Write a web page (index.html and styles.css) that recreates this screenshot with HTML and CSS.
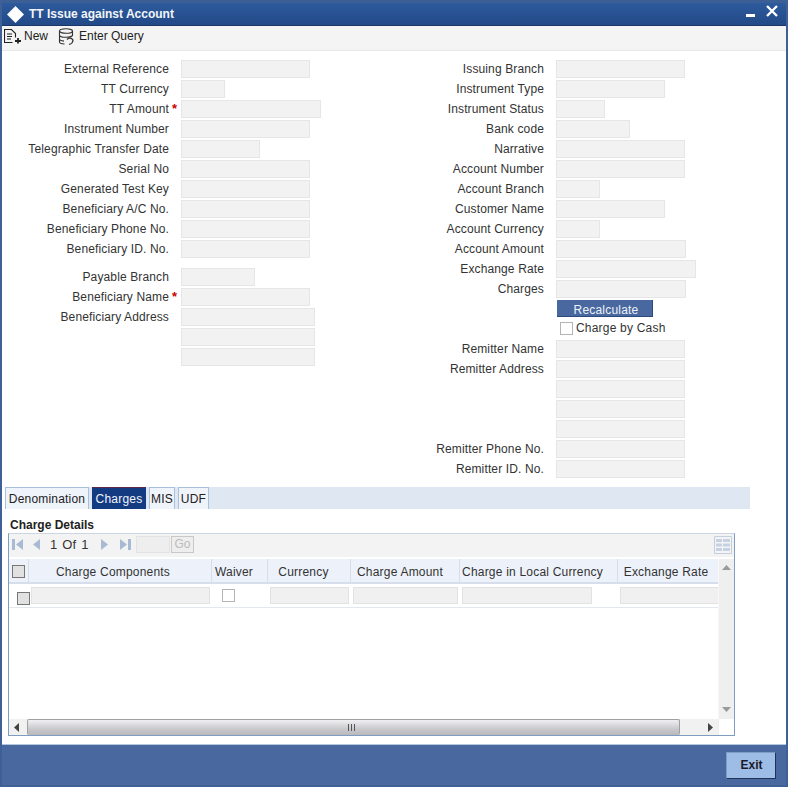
FILE: index.html
```html
<!DOCTYPE html>
<html lang="en">
<head>
<meta charset="utf-8">
<title>TT Issue against Account</title>
<link rel="stylesheet" href="styles.css">
</head>
<body>
<div class="window">
  <header class="titlebar">
    <svg class="logo" width="17" height="17" viewBox="0 0 17 17"><path d="M8.500 0 17 8.500 8.500 17 0 8.500Z" fill="#fff"/></svg>
    <h1 class="title">TT Issue against Account</h1>
    <span class="minimize"></span>
    <svg class="close" width="12" height="12" viewBox="0 0 12 12"><path d="M1 1 11 11M11 1 1 11" stroke="#fff" stroke-width="2.4" fill="none"/></svg>
  </header>
  <div class="toolbar">
    <span class="tool">
      <svg width="18" height="16" viewBox="0 0 18 16" fill="none" stroke="#222" stroke-width="1.1"><path d="M.5 15V1.5h7l4 4v4M3 6h5M3 8.5h5M3 11h4M.5 14.500h8"/><path d="M14 10v5.500M11 13h6" stroke-width="1.800"/></svg>
      New
    </span>
    <span class="tool tool-query">
      <svg width="17" height="17" viewBox="0 0 17 17" fill="none" stroke="#333" stroke-width="1.100"><ellipse cx="8" cy="3" rx="6.500" ry="2.300"/><path d="M1.500 3v11c0 1 2 1.800 5 2M14.500 3v5M1.500 7c0 1.300 3 2.300 6.500 2.300s6.500-1 6.500-2.300M1.500 11c0 1 2 1.800 4.500 2.100"/><path d="M9 11.500c1.500-1.800 4.500-1.800 6 .5l-.7 2.500c-.8 1.200-2 1.800-3.300 1.800" stroke-width="1.300"/></svg>
      Enter Query
    </span>
  </div>
  <main class="form">
    <section class="col col-left">
      <div class="row"><label>External Reference</label><span class="input w129"></span></div>
      <div class="row"><label>TT Currency</label><span class="input w44"></span></div>
      <div class="row"><label>TT Amount<b class="req">*</b></label><span class="input w140"></span></div>
      <div class="row"><label>Instrument Number</label><span class="input w129"></span></div>
      <div class="row"><label>Telegraphic Transfer Date</label><span class="input w79"></span></div>
      <div class="row"><label>Serial No</label><span class="input w129"></span></div>
      <div class="row"><label>Generated Test Key</label><span class="input w129"></span></div>
      <div class="row"><label>Beneficiary A/C No.</label><span class="input w129"></span></div>
      <div class="row"><label>Beneficiary Phone No.</label><span class="input w129"></span></div>
      <div class="row"><label>Beneficiary ID. No.</label><span class="input w129"></span></div>
      <div class="row group-gap"><label>Payable Branch</label><span class="input w74"></span></div>
      <div class="row"><label>Beneficiary Name<b class="req">*</b></label><span class="input w129"></span></div>
      <div class="row"><label>Beneficiary Address</label><span class="input w134"></span></div>
      <div class="row"><label></label><span class="input w134"></span></div>
      <div class="row"><label></label><span class="input w134"></span></div>
    </section>
    <section class="col col-right">
      <div class="row"><label>Issuing Branch</label><span class="input w129"></span></div>
      <div class="row"><label>Instrument Type</label><span class="input w109"></span></div>
      <div class="row"><label>Instrument Status</label><span class="input w49"></span></div>
      <div class="row"><label>Bank code</label><span class="input w74"></span></div>
      <div class="row"><label>Narrative</label><span class="input w129"></span></div>
      <div class="row"><label>Account Number</label><span class="input w129"></span></div>
      <div class="row"><label>Account Branch</label><span class="input w44"></span></div>
      <div class="row"><label>Customer Name</label><span class="input w109"></span></div>
      <div class="row"><label>Account Currency</label><span class="input w44"></span></div>
      <div class="row"><label>Account Amount</label><span class="input w130"></span></div>
      <div class="row"><label>Exchange Rate</label><span class="input w140"></span></div>
      <div class="row"><label>Charges</label><span class="input w130"></span></div>
      <div class="row row-btn"><label></label><span class="recalc">Recalculate</span></div>
      <div class="row row-check"><label></label><span class="check"></span><span class="check-label">Charge by Cash</span></div>
      <div class="row"><label>Remitter Name</label><span class="input w129"></span></div>
      <div class="row"><label>Remitter Address</label><span class="input w129"></span></div>
      <div class="row"><label></label><span class="input w129"></span></div>
      <div class="row"><label></label><span class="input w129"></span></div>
      <div class="row"><label></label><span class="input w129"></span></div>
      <div class="row"><label>Remitter Phone No.</label><span class="input w129"></span></div>
      <div class="row"><label>Remitter ID. No.</label><span class="input w129"></span></div>
    </section>
  </main>
  <nav class="tabs">
    <span class="tab tab-den">Denomination</span>
    <span class="tab tab-active">Charges</span>
    <span class="tab tab-mis">MIS</span>
    <span class="tab tab-udf">UDF</span>
  </nav>
  <div class="details">
    <h2 class="details-title">Charge Details</h2>
    <div class="grid-box">
      <div class="pager">
        <svg class="pg" width="13" height="13" viewBox="0 0 13 13"><path d="M1 1h3v11H1zM12 1v11L5 6.500z" fill="#a9bad3"/></svg>
        <svg class="pg pg-prev" width="9" height="13" viewBox="0 0 9 13"><path d="M8 1v11L1 6.500z" fill="#a9bad3"/></svg>
        <span class="pg-text">1 Of 1</span>
        <svg class="pg pg-next" width="9" height="13" viewBox="0 0 9 13"><path d="M1 1v11l7-5.500z" fill="#a9bad3"/></svg>
        <svg class="pg pg-last" width="13" height="13" viewBox="0 0 13 13"><path d="M12 1H9v11h3zM1 1v11l7-5.500z" fill="#a9bad3"/></svg>
        <span class="pg-input"></span>
        <span class="pg-go">Go</span>
        <svg class="pg-columns" width="18" height="18" viewBox="0 0 18 18"><path d="M.5.5h17v17H.5z" fill="#f4f4f4" stroke="#c3cfdf"/><path d="M2 3h14v3H2zM2 7.500h14v3H2zM2 12h14v3H2z" fill="#c6d2e2"/><path d="M8.500 2v14" stroke="#f4f4f4"/></svg>
      </div>
      <div class="grid-body">
        <div class="grid-main">
          <div class="thead">
            <span class="th c-check"><span class="box"></span></span>
            <span class="th c-comp">Charge Components</span>
            <span class="th c-waiver">Waiver</span>
            <span class="th c-cur">Currency</span>
            <span class="th c-amt">Charge Amount</span>
            <span class="th c-local">Charge in Local Currency</span>
            <span class="th c-rate">Exchange Rate</span>
          </div>
          <div class="trow">
            <span class="td c-check"><span class="box box-row"></span></span>
            <span class="td c-comp"><span class="cell-input"></span></span>
            <span class="td c-waiver"><span class="check check-cell"></span></span>
            <span class="td c-cur"><span class="cell-input"></span></span>
            <span class="td c-amt"><span class="cell-input"></span></span>
            <span class="td c-local"><span class="cell-input cell-short"></span></span>
            <span class="td c-rate"><span class="cell-input cell-cut"></span></span>
          </div>
        </div>
        <div class="vscroll">
          <svg width="9" height="6" viewBox="0 0 9 6"><path d="M0 5h9L4.500 0z" fill="#9a9a9a"/></svg>
          <svg width="9" height="6" viewBox="0 0 9 6"><path d="M0 1h9L4.500 6z" fill="#9a9a9a"/></svg>
        </div>
      </div>
      <div class="hscroll">
        <svg class="arrow" width="6" height="9" viewBox="0 0 6 9"><path d="M5 0v9L0 4.500z" fill="#444"/></svg>
        <div class="thumb"><span class="grip"></span></div>
        <svg class="arrow arrow-right" width="6" height="9" viewBox="0 0 6 9"><path d="M1 0v9l5-4.500z" fill="#444"/></svg>
        <span class="corner"></span>
      </div>
    </div>
  </div>
  <footer class="footer"><span class="exit">Exit</span></footer>
</div>
</body>
</html>
```
FILE: styles.css
```css
* { box-sizing: border-box; }
html, body { margin: 0; padding: 0; }
body {
  width: 788px;
  height: 787px;
  overflow: hidden;
  font-family: "Liberation Sans", Arial, sans-serif;
  font-size: 12px;
  letter-spacing: .2px;
  color: #333;
  background: #fff;
}
.window {
  width: 788px;
  height: 787px;
  border-left: 2px solid #3f6096;
  border-right: 2px solid #3f6096;
  display: flex;
  flex-direction: column;
  background: #fff;
}
.titlebar {
  height: 26px;
  flex: none;
  display: flex;
  align-items: center;
  padding: 3px 8px 0 5px;
  border-bottom: 1px solid #1b3768;
  background: linear-gradient(#2f5d9f, #224988);
  box-shadow: inset 0 3px 0 #3c6096;
  color: #fff;
}
.logo { margin-right: 5px; }
.title { margin: 0; font-size: 12px; font-weight: bold; letter-spacing: 0; flex: 1; color: #f2f5fa; }
.minimize { width: 9px; height: 3px; background: #fff; margin: 3px 11px 0 0; }
.close { margin-top: -6px; }
.toolbar {
  height: 25px;
  flex: none;
  display: flex;
  align-items: center;
  padding: 0 0 4px 2px;
  background: #f4f4f4;
  border-bottom: 1px solid #e8e8e8;
  color: #222;
  letter-spacing: 0;
}
.tool { display: flex; align-items: center; gap: 2px; }
.tool-query { margin-left: 10px; gap: 4px; }
.form { display: flex; height: 436px; flex: none; padding-top: 8px; }
.col { display: flex; flex-direction: column; }
.col-left { width: 375px; }
.row { height: 20px; display: flex; align-items: center; flex: none; }
.group-gap { margin-top: 8px; }
.row label { text-align: right; white-space: nowrap; position: relative; flex: none; width: 167px; margin-right: 12px; letter-spacing: .13px; }
.req { position: absolute; left: 170px; top: -1px; color: #c00; font-size: 13px; }
.input {
  display: block;
  height: 18px;
  background: #f2f2f2;
  border: 1px solid #e6e6e6;
}
.w44 { width: 44px; }
.w49 { width: 49px; }
.w74 { width: 74px; }
.w79 { width: 79px; }
.w109 { width: 109px; }
.w129 { width: 129px; }
.w130 { width: 130px; }
.w134 { width: 134px; }
.w140 { width: 140px; }
.row-btn { height: 17px; margin-top: 1px; align-items: flex-start; }
.recalc {
  width: 96px;
  height: 17px;
  margin-left: 1px;
  padding-left: 3px;
  background: #48689f;
  border-bottom: 1px solid #2c4a7c;
  border-right: 1px solid #2c4a7c;
  color: #eef2f8;
  text-align: center;
  line-height: 20px;
}
.row-check { margin: 1px 0; height: 20px; }
.check {
  display: block;
  width: 13px;
  height: 13px;
  margin-left: 4px;
  background: #fff;
  border: 1px solid #b4b4b4;
}
.check-label { margin-left: 3px; color: #333; }
.tabs {
  width: 745px;
  margin-left: 3px;
  height: 22px;
  flex: none;
  display: flex;
  align-items: flex-end;
  background: #dfe7f3;
  gap: 3px;
}
.tab {
  height: 22px;
  text-align: center;
  line-height: 23px;
  background: #eff3fa;
  border: 1px solid #a9c0dc;
  border-bottom: none;
  color: #222;
}
.tab-den { width: 84px; }
.tab-active { width: 54px; background: #133b82; border-color: #5b2a4a #133b82 #133b82; color: #f2f5fa; }
.tab-mis { width: 26px; }
.tab-udf { width: 31px; }
.details { flex: none; height: 235px; padding: 9px 0 0 6px; }
.details-title { margin: 0 0 0 2px; font-size: 12px; line-height: 15px; letter-spacing: 0; color: #222; }
.grid-box { width: 727px; height: 203px; display: flex; flex-direction: column; border: 1px solid #7f9dc0; border-top-color: #ccd6e3; }
.pager { height: 23px; flex: none; display: flex; align-items: center; padding: 0 0 2px 2px; background: #f3f3f3; color: #333; letter-spacing: 0; }
.pg-prev { margin-left: 8px; }
.pg-text { margin-left: 9px; font-size: 13px; word-spacing: 1.5px; width: 42px; }
.pg-next { margin-left: 8px; }
.pg-last { margin-left: 10px; }
.pg-input { width: 34px; height: 17px; margin-left: 4px; background: #eee; border: 1px solid #e3e3e3; }
.pg-go { width: 23px; height: 17px; margin-left: 1px; border: 1px solid #c8c8c8; background: #eee; color: #bbb; text-align: center; line-height: 15px; }
.pg-columns { margin-left: auto; margin-right: 2px; }
.grid-body { flex: 1; min-height: 0; display: flex; border-top: 2px solid #fff; }
.grid-main { flex: 1; min-width: 0; background: #fff; overflow: hidden; }
.thead { height: 25px; display: flex; background: #edf2fa; border-bottom: 2px solid #d5deea; color: #333; }
.th { display: flex; align-items: center; justify-content: center; padding-top: 2px; border-right: 1px solid #d5deea; flex: none; }
.th.c-comp { padding-right: 14px; }
.th.c-waiver { padding-right: 11px; }
.th.c-cur { padding-right: 11px; }
.th.c-amt { padding-right: 10px; }
.th.c-local { padding-right: 12px; }
.th.c-rate { padding-right: 4px; }
.trow { height: 24px; display: flex; border-bottom: 1px solid #e3e8ef; }
.td { display: flex; align-items: center; flex: none; padding: 0 2px; }
.c-check { width: 20px; }
.c-comp { width: 183px; }
.c-waiver { width: 56px; }
.c-cur { width: 83px; }
.c-amt { width: 109px; }
.c-local { width: 158px; }
.c-rate { width: 100px; border-right: none; }
.box { display: block; width: 13px; height: 13px; background: #e1e1e1; border: 1px solid #777; flex: none; }
.box-row { margin: 5px 0 0 8px; }
.td.c-check { padding: 0; }
.td.c-waiver { justify-content: flex-start; padding-left: 10px; }
.td.c-rate { padding-right: 0; }
.check-cell { margin: 0; }
.cell-input { display: block; width: 100%; height: 17px; background: #f0f0f0; border: 1px solid #e2e2e2; }
.cell-short { width: 130px; }
.cell-cut { border-right: none; }
.vscroll { width: 16px; flex: none; display: flex; flex-direction: column; align-items: center; justify-content: space-between; padding: 6px 0 7px; background: #efefef; border-left: 1px solid #f7f7f7; }
.hscroll { height: 16px; flex: none; display: flex; align-items: center; background: #f1f1f1; }
.arrow { margin-left: 5px; flex: none; }
.thumb {
  width: 653px;
  height: 16px;
  margin-left: 7px;
  flex: none;
  display: flex;
  align-items: center;
  justify-content: center;
  background: linear-gradient(#f0f0f2, #c9c9cd 60%, #b9b9bd);
  border: 1px solid #a0a0a0;
  border-radius: 2px;
  border-bottom: none;
}
.grip { width: 8px; height: 7px; margin-right: 3px; background: repeating-linear-gradient(90deg, #555 0 1px, transparent 1px 3px); }
.arrow-right { margin-left: 27px; }
.corner { width: 16px; height: 16px; margin-left: auto; background: #fff; border-left: 1px solid #eee; }
.footer {
  flex: 1;
  display: flex;
  justify-content: flex-end;
  align-items: flex-start;
  padding: 7px 10px 0 0;
  background: #48689f;
  border-top: 1px solid #b4c6dd;
  border-bottom: 2px solid #3f5f95;
}
.exit {
  width: 50px;
  height: 27px;
  padding-left: 1px;
  background: #9dbde6;
  border: 1px solid #7f9cc6;
  border-right-color: #1f3358;
  border-bottom-color: #1f3358;
  color: #1a1a2a;
  font-weight: bold;
  letter-spacing: 0;
  text-align: center;
  line-height: 25px;
}
```
